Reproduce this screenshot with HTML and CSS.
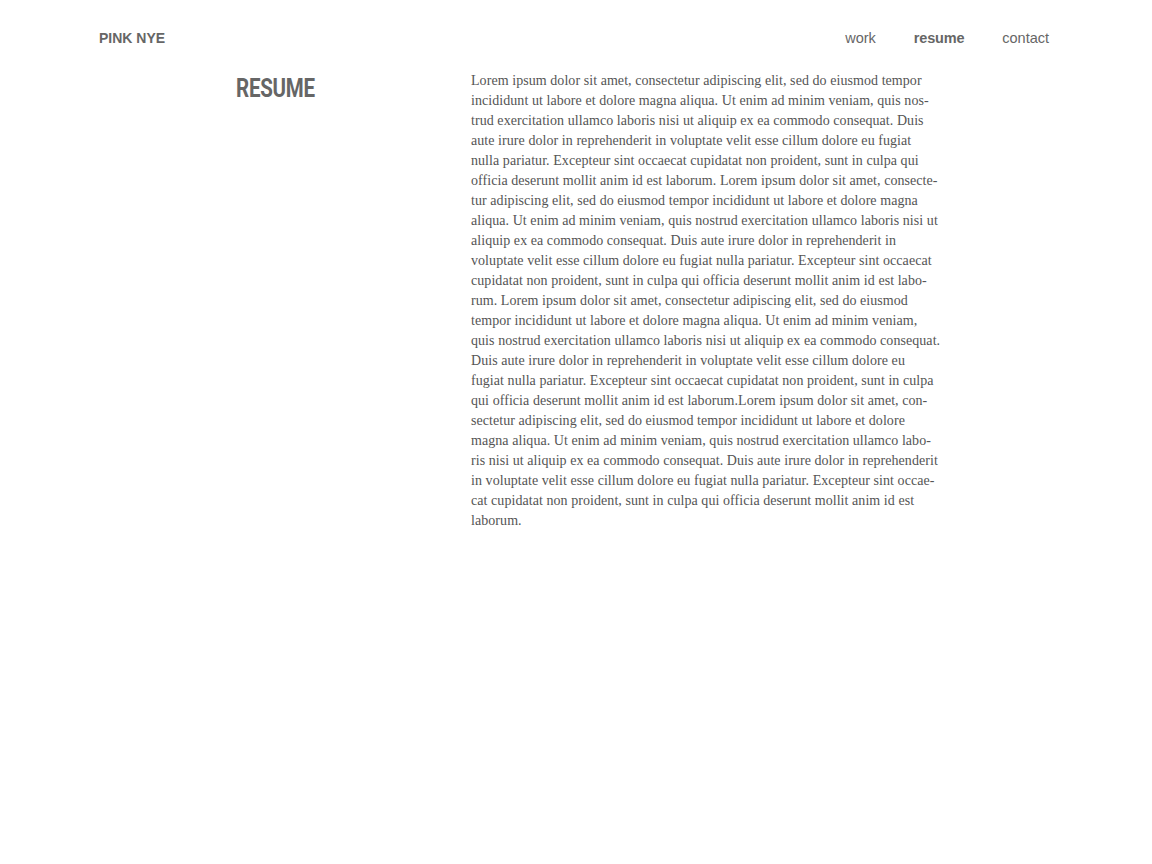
FILE: index.html
```html
<!DOCTYPE html>
<html lang="en">
<head>
<meta charset="utf-8">
<title>Pink Nye — Resume</title>
<link rel="stylesheet" href="styles.css">
</head>
<body>
<div class="page">
  <header class="site-header">
    <a class="brand" href="#">PINK NYE</a>
    <nav class="nav">
      <a href="#" class="nav-link">work</a>
      <a href="#" class="nav-link active">resume</a>
      <a href="#" class="nav-link">contact</a>
    </nav>
  </header>
  <main class="content">
    <div class="title-col"><h1 class="title">RESUME</h1></div>
    <p class="body-text">Lorem ipsum dolor sit amet, consectetur adipiscing elit, sed do eiusmod tempor<br>incididunt ut labore et dolore magna aliqua. Ut enim ad minim veniam, quis nos-<br>trud exercitation ullamco laboris nisi ut aliquip ex ea commodo consequat. Duis<br>aute irure dolor in reprehenderit in voluptate velit esse cillum dolore eu fugiat<br>nulla pariatur. Excepteur sint occaecat cupidatat non proident, sunt in culpa qui<br>officia deserunt mollit anim id est laborum. Lorem ipsum dolor sit amet, consecte-<br>tur adipiscing elit, sed do eiusmod tempor incididunt ut labore et dolore magna<br>aliqua. Ut enim ad minim veniam, quis nostrud exercitation ullamco laboris nisi ut<br>aliquip ex ea commodo consequat. Duis aute irure dolor in reprehenderit in<br>voluptate velit esse cillum dolore eu fugiat nulla pariatur. Excepteur sint occaecat<br>cupidatat non proident, sunt in culpa qui officia deserunt mollit anim id est labo-<br>rum. Lorem ipsum dolor sit amet, consectetur adipiscing elit, sed do eiusmod<br>tempor incididunt ut labore et dolore magna aliqua. Ut enim ad minim veniam,<br>quis nostrud exercitation ullamco laboris nisi ut aliquip ex ea commodo consequat.<br>Duis aute irure dolor in reprehenderit in voluptate velit esse cillum dolore eu<br>fugiat nulla pariatur. Excepteur sint occaecat cupidatat non proident, sunt in culpa<br>qui officia deserunt mollit anim id est laborum.Lorem ipsum dolor sit amet, con-<br>sectetur adipiscing elit, sed do eiusmod tempor incididunt ut labore et dolore<br>magna aliqua. Ut enim ad minim veniam, quis nostrud exercitation ullamco labo-<br>ris nisi ut aliquip ex ea commodo consequat. Duis aute irure dolor in reprehenderit<br>in voluptate velit esse cillum dolore eu fugiat nulla pariatur. Excepteur sint occae-<br>cat cupidatat non proident, sunt in culpa qui officia deserunt mollit anim id est<br>laborum.</p>
  </main>
</div>
</body>
</html>
```

FILE: styles.css
```css
* { box-sizing: border-box; }

html, body {
  margin: 0;
  padding: 0;
  background: #ffffff;
}

body {
  color: #666666;
  font-family: "Liberation Sans", Arial, sans-serif;
}

.page {
  width: 950px;
  margin-left: 99px;
}

.site-header {
  display: flex;
  justify-content: space-between;
  align-items: center;
  height: 78px;
  padding: 0 0 2px 0;
}

.brand {
  font-family: "Liberation Sans", Arial, sans-serif;
  font-weight: bold;
  font-size: 14px;
  color: #666666;
  text-decoration: none;
}

.nav {
  display: flex;
  gap: 38px;
}

.nav-link {
  font-size: 14.5px;
  color: #666666;
  text-decoration: none;
}

.nav-link.active {
  font-weight: bold;
  letter-spacing: -0.2px;
}

.content {
  display: flex;
  padding-left: 137px;
  margin-top: -7px;
}

.title-col {
  width: 235px;
  flex: none;
}

.title {
  display: inline-block;
  margin: 0;
  padding-top: 3px;
  font-family: Roboto, "Liberation Sans", Arial, sans-serif;
  font-weight: bold;
  font-size: 25px;
  line-height: 30px;
  color: #666666;
  letter-spacing: -0.3px;
  transform: scaleX(0.82);
  transform-origin: left center;
}

.body-text {
  margin: 0;
  font-family: "Liberation Serif", "Times New Roman", serif;
  font-size: 14px;
  line-height: 20px;
  color: #555555;
  letter-spacing: 0.06px;
  white-space: nowrap;
}
```
